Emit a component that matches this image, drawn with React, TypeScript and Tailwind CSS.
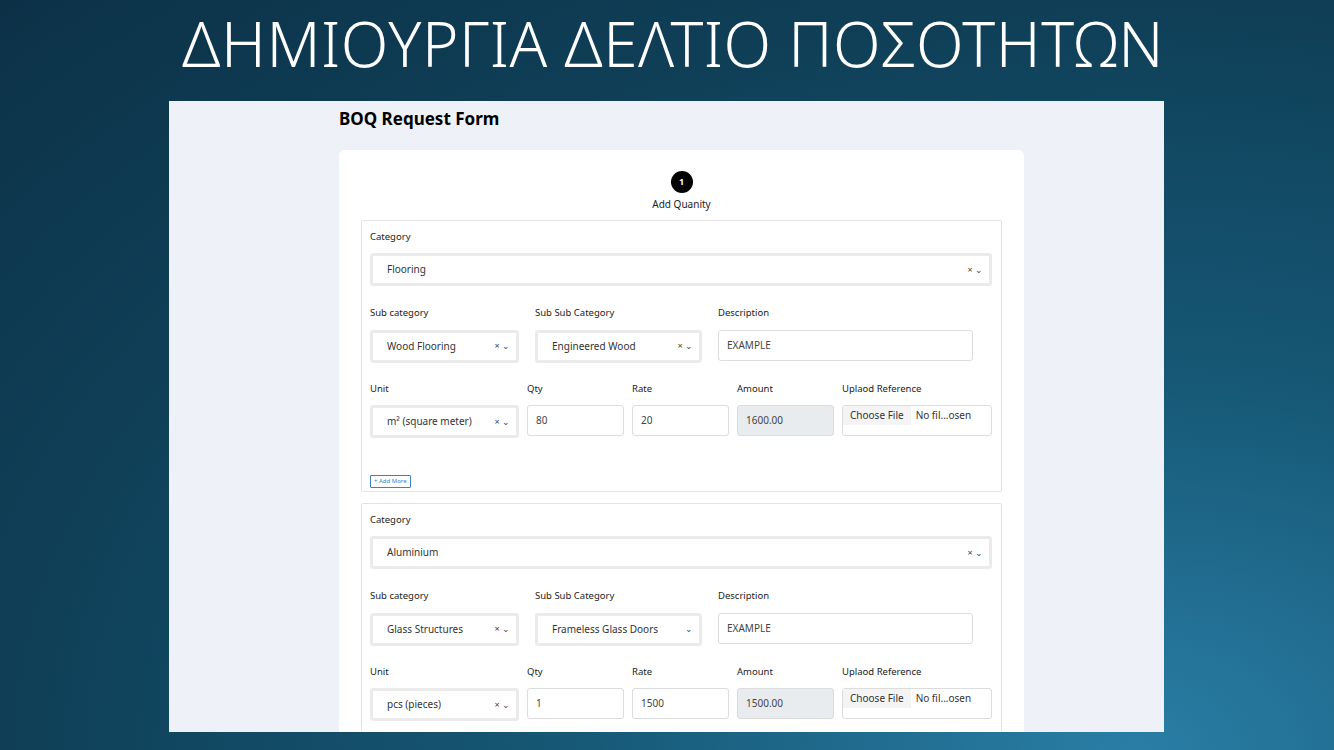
import React from "react";

const F = { fontFamily: '"Noto Sans", "Open Sans", sans-serif' };

function Sel({ w, v, x = true }: { w: string; v: React.ReactNode; x?: boolean }) {
  return (
    <div className={`${w} h-[33px] border-[3px] border-[#ebebeb] rounded-[3px] bg-white flex items-center pl-[14px] pr-[6px] text-[10px] text-[#333]`}>
      <span className="flex-1">{v}</span>
      <span className="text-[9px] text-[#444]">{x ? "× " : ""}⌄</span>
    </div>
  );
}
function Inp({ w, v, gray = false }: { w: string; v: string; gray?: boolean }) {
  return (
    <div className={`${w} h-[31px] border border-[#dcdcdc] rounded-[3px] ${gray ? "bg-[#e9ecef]" : "bg-white"} flex items-center pl-[8px] text-[10px] text-[#444]`}>{v}</div>
  );
}
function L({ children, w }: { children: React.ReactNode; w: string }) {
  return <div className={`${w} text-[9.5px] text-[#222] mb-[9px]`}>{children}</div>;
}
function Section({ cat, sub, subsub, subsubX, unit, qty, rate, amt, more, h }: any) {
  return (
    <div className={`border border-[#e2e2e2] rounded-[2px] px-[8px] pt-[9px] ${h}`}>
      <L w="">Category</L>
      <Sel w="w-[622px]" v={cat} />
      <div className="flex mt-[20px]">
        <div className="w-[165px]"><L w="">Sub category</L><Sel w="w-[149px]" v={sub} /></div>
        <div className="w-[183px]"><L w="">Sub Sub Category</L><Sel w="w-[167px]" v={subsub} x={subsubX} /></div>
        <div><L w="">Description</L><Inp w="w-[255px]" v="EXAMPLE" /></div>
      </div>
      <div className="flex mt-[19px]">
        <div className="w-[157px]"><L w="">Unit</L><Sel w="w-[149px]" v={unit} /></div>
        <div className="w-[105px]"><L w="">Qty</L><Inp w="w-[97px]" v={qty} /></div>
        <div className="w-[105px]"><L w="">Rate</L><Inp w="w-[97px]" v={rate} /></div>
        <div className="w-[105px]"><L w="">Amount</L><Inp w="w-[97px]" v={amt} gray /></div>
        <div><L w="">Uplaod Reference</L>
          <div className="w-[150px] h-[31px] border border-[#dcdcdc] rounded-[3px] flex items-start text-[10px] text-[#333]">
            <span className="bg-[#f4f4f4] px-[7px] py-[2px]">Choose File</span><span className="px-[5px] py-[2px]">No fil...osen</span>
          </div>
        </div>
      </div>
      {more && <div className="mt-[37px] inline-block border border-[#3b82c4] text-[#3b82c4] text-[6px] px-[3px] py-[1px] rounded-[1px]">+ Add More</div>}
    </div>
  );
}

export default function App() {
  return (
    <div style={F} className="w-[1334px] h-[750px] overflow-hidden bg-[radial-gradient(ellipse_at_85%_100%,#2a7ea6_0%,#165876_35%,#0f3f57_70%,#0c3147_100%)] flex flex-col items-center">
      <h1 className="text-white text-[62px] font-light leading-none mt-[12px] tracking-[0.5px] ml-[12px]">ΔΗΜΙΟΥΡΓΙΑ ΔΕΛΤΙΟ ΠΟΣΟΤΗΤΩΝ</h1>
      <div className="mt-[27px] w-[995px] h-[631px] bg-[#eef1f8] ml-[-1px] pl-[170px] overflow-hidden">
        <div className="text-[17px] font-bold text-black pt-[7px] leading-[22px]">BOQ Request Form</div>
        <div className="mt-[20px] w-[685px] bg-white rounded-[6px] px-[22px] pt-[21px] h-[600px]">
          <div className="flex flex-col items-center">
            <div className="w-[22px] h-[22px] rounded-full bg-black text-white text-[9px] font-bold flex items-center justify-center">1</div>
            <div className="text-[10px] text-[#222] mt-[4px]">Add Quanity</div>
          </div>
          <div className="mt-[8px] flex flex-col gap-[11px]">
            <Section cat="Flooring" sub="Wood Flooring" subsub="Engineered Wood" subsubX unit={<>m² (square meter)</>} qty="80" rate="20" amt="1600.00" more h="h-[272px]" />
            <Section cat="Aluminium" sub="Glass Structures" subsub="Frameless Glass Doors" subsubX={false} unit="pcs (pieces)" qty="1" rate="1500" amt="1500.00" h="h-[260px]" />
          </div>
        </div>
      </div>
    </div>
  );
}
